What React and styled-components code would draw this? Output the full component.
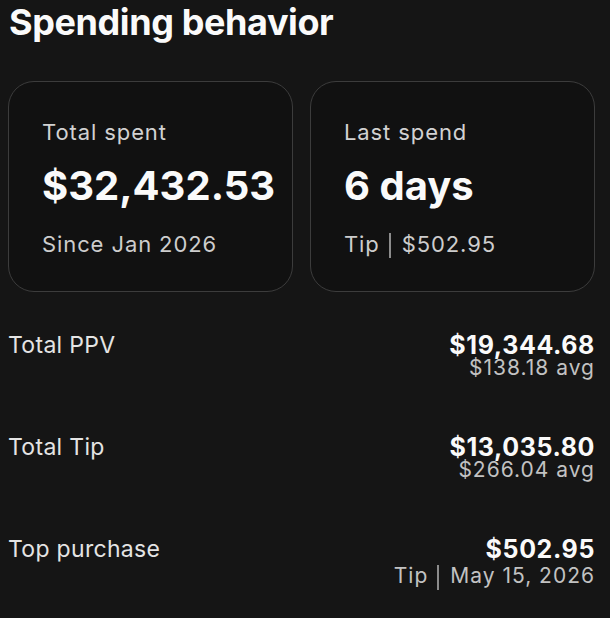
import styled, { createGlobalStyle } from "styled-components";

const GlobalStyle = createGlobalStyle`
    body {
        margin: 0;
        background: #151515;
        font-family: Inter, "Liberation Sans", sans-serif;
        color: #f2f2f2;
    }
`

const stats = [
    { label: "Total PPV", value: "$19,344.68", sub: "$138.18 avg" },
    { label: "Total Tip", value: "$13,035.80", sub: "$266.04 avg" },
    { label: "Top purchase", value: "$502.95", tag: "Tip", sub: "May 15, 2026" },
];

// "Tip | amount" style line with a thin divider
const Divided = ({ tag, children }) => (
    <>
        {tag}
        <Bar />
        {children}
    </>
)

const Card = ({ label, value, children }) => (
    <StyledCard>
        <CardLabel>{label}</CardLabel>
        <CardValue>{value}</CardValue>
        <CardFoot>{children}</CardFoot>
    </StyledCard>
)

const App = () => {
    return (
        <Page>
            <GlobalStyle />
            <Title>Spending behavior</Title>
            <Cards>
                <Card label="Total spent" value="$32,432.53">Since Jan 2026</Card>
                <Card label="Last spend" value="6 days">
                    <Divided tag="Tip">$502.95</Divided>
                </Card>
            </Cards>
            <Rows>
                {stats.map(s => (
                    <Row key={s.label}>
                        <RowLabel>{s.label}</RowLabel>
                        <RowRight>
                            <RowValue>{s.value}</RowValue>
                            <RowSub>
                                {s.tag ? <Divided tag={s.tag}>{s.sub}</Divided> : s.sub}
                            </RowSub>
                        </RowRight>
                    </Row>
                ))}
            </Rows>
        </Page>
    )
}

const Page = styled.div`
    width: 610px;
    height: 618px;
    box-sizing: border-box;
    padding: 2px 15px 0 8px;
`
const Title = styled.h1`
    margin: 0;
    font-size: 36px;
    font-weight: 700;
    line-height: 40px;
    letter-spacing: -0.4px;
    color: #fafafa;
    padding-left: 1px;
`
const Cards = styled.div`
    display: grid;
    grid-template-columns: 1fr 1fr;
    gap: 17px;
    margin-top: 39px;
`
const StyledCard = styled.div`
    height: 211px;
    box-sizing: border-box;
    border: 1.5px solid #3c3c3c;
    border-radius: 26px;
    background: #111111;
    padding: 36px 16px 0 33px;
    display: flex;
    flex-direction: column;
`
const CardLabel = styled.div`
    font-size: 22px;
    line-height: 28px;
    letter-spacing: 0.9px;
    color: #d2d2d2;
`
const CardValue = styled.div`
    font-size: 40px;
    font-weight: 700;
    line-height: 44px;
    margin-top: 18px;
    color: #fafafa;
`
const CardFoot = styled.div`
    display: flex;
    align-items: center;
    font-size: 22px;
    line-height: 28px;
    letter-spacing: 0.9px;
    margin-top: 22px;
    color: #cdcdcd;
`
const Bar = styled.span`
    display: inline-block;
    width: 2px;
    height: 25px;
    background: #8c8c8c;
    margin: 3px 11px 0 9px;
`
const Rows = styled.div`
    display: flex;
    flex-direction: column;
    gap: 56px;
    margin-top: 40px;
`
const Row = styled.div`
    display: flex;
    justify-content: space-between;
    align-items: flex-start;
`
const RowLabel = styled.div`
    font-size: 23px;
    line-height: 26px;
    letter-spacing: 0.3px;
    color: #e4e4e4;
`
const RowRight = styled.div`
    display: flex;
    flex-direction: column;
    align-items: flex-end;
`
const RowValue = styled.div`
    font-size: 25px;
    font-weight: 700;
    line-height: 26px;
    letter-spacing: 0.6px;
    color: #fafafa;
`
const RowSub = styled.div`
    display: flex;
    align-items: center;
    font-size: 21px;
    line-height: 20px;
    letter-spacing: 1px;
    color: #c2c2c2;
`

export default App
